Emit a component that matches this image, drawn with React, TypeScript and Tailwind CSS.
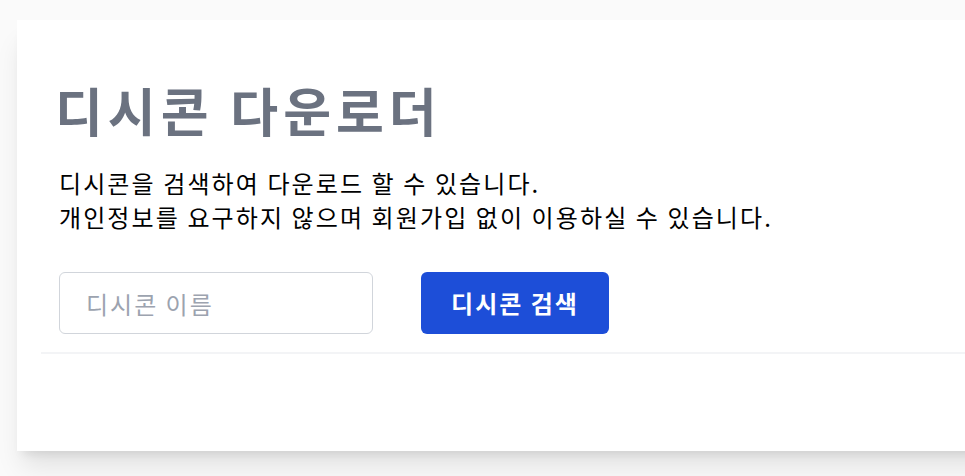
import { useState } from 'react';

export default function App() {
    const [name, setName] = useState('');

    return (
        <div className="min-h-screen overflow-hidden bg-[#fafafa] pt-[20px] pl-[17px] font-['Noto_Sans_CJK_KR',sans-serif]">
            <div className="w-[1000px] h-[431px] bg-white p-6 shadow-xl">
                <div className="px-4 pt-[40px]">
                    <h1 className="text-[52px] leading-none font-bold tracking-[5px] text-[#6b7280] -ml-[2px]">디시콘 다운로더</h1>
                    <p className="mt-[30px] pl-[2px] text-2xl leading-[34px] tracking-[2.1px] text-black">
                        디시콘을 검색하여 다운로드 할 수 있습니다.
                        <br />
                        개인정보를 요구하지 않으며 회원가입 없이 이용하실 수 있습니다.
                    </p>
                    <div className="mt-[38px] flex items-center gap-[48px] pl-[2px]">
                        <input
                            value={name}
                            onChange={e => setName(e.target.value)}
                            placeholder="디시콘 이름"
                            className="w-[314px] h-[62px] px-[26px] rounded-md border border-[#d1d5db] text-2xl tracking-[2px] text-gray-700 placeholder:text-[#9ca3af] outline-none"
                        />
                        <button className="w-[188px] h-[62px] rounded-md bg-[#1d4ed8] text-2xl font-bold tracking-[2px] text-white">
                            디시콘 검색
                        </button>
                    </div>
                </div>
                <div className="mt-[18px] h-[2px] bg-[#f3f4f6]" />
            </div>
        </div>
    );
}
